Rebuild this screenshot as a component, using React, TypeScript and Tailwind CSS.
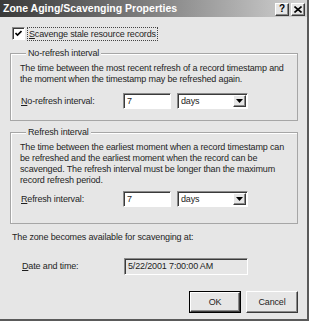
import React from "react";

const sunken =
  "border border-t-[#8a8a8a] border-l-[#8a8a8a] border-r-white border-b-white shadow-[inset_1px_1px_0_#3a3a3a]";
const raised =
  "border border-t-white border-l-white border-r-[#3a3a3a] border-b-[#3a3a3a] shadow-[inset_-1px_-1px_0_#8a8a8a]";

function U({ children }: { children: React.ReactNode }) {
  return <span className="underline underline-offset-[1px]">{children}</span>;
}

function Arrow() {
  return (
    <svg width="7" height="4" viewBox="0 0 7 4">
      <path d="M0 0H7L3.5 4Z" fill="#000" />
    </svg>
  );
}

function Row({ label }: { label: React.ReactNode }) {
  return (
    <div className="flex items-center h-[16px]">
      <div className="w-[103px] pl-[1px]">{label}</div>
      <div className={`w-[48px] h-[16px] bg-white ${sunken} pl-[3px] flex items-center`}>7</div>
      <div className={`ml-[6px] w-[71px] h-[16px] bg-white ${sunken} flex items-center`}>
        <span className="pl-[3px] flex-1">days</span>
        <div className={`w-[13px] h-[12px] mr-[1px] bg-[#e6e6e6] ${raised} flex items-center justify-center`}>
          <Arrow />
        </div>
      </div>
    </div>
  );
}

export default function App() {
  return (
    <div className="w-[309px] h-[321px] bg-[#e6e6e6] text-[#1e1e1e] font-['Liberation_Sans',Arial,sans-serif] text-[9px] leading-[11px] tracking-[-0.15px] flex flex-col border-r-2 border-b-2 border-r-[#5a5a5a] border-b-[#5a5a5a] overflow-hidden">
      <div className="h-[17px] shrink-0 flex items-center bg-linear-to-r from-[#3a3a3a] to-[#d4d4d4] pl-[3px] pr-[2px]">
        <span className="text-white font-bold text-[10.5px] tracking-normal">
          Zone Aging/Scavenging Properties
        </span>
        <div className="ml-auto flex gap-[2px] mt-[1px]">
          <div className={`w-[14px] h-[13px] bg-[#e6e6e6] ${raised} flex items-center justify-center text-black font-bold text-[10px] leading-none`}>
            ?
          </div>
          <div className={`w-[14px] h-[13px] bg-[#e6e6e6] ${raised} flex items-center justify-center`}>
            <svg width="8" height="7" viewBox="0 0 8 7">
              <path d="M0.5 0.5L7.5 6.5M7.5 0.5L0.5 6.5" stroke="#000" strokeWidth="1.6" />
            </svg>
          </div>
        </div>
      </div>

      <div className="flex flex-col px-[10px] pr-[9px]">
        <div className="mt-[10px] ml-[2px] flex items-center h-[13px]">
          <div className={`w-[13px] h-[13px] bg-white ${sunken} flex items-center justify-center`}>
            <svg width="7" height="7" viewBox="0 0 7 7">
              <path d="M0.5 3L2.5 5L6.5 1" stroke="#000" strokeWidth="1.6" fill="none" />
            </svg>
          </div>
          <span className="ml-[3px] px-[1px] outline outline-1 outline-dotted outline-[#444] leading-[12px]">
            <U>S</U>cavenge stale resource records
          </span>
        </div>

        <fieldset className="mt-[7px] border border-[#a6a6a6] shadow-[inset_1px_1px_0_#fff] pl-[9px] pt-[4px] pb-[11px]">
          <legend className="ml-[6px] px-[2px] bg-[#e6e6e6] leading-[12px]">No-refresh interval</legend>
          <p>The time between the most recent refresh of a record timestamp and</p>
          <p>the moment when the timestamp may be refreshed again.</p>
          <div className="mt-[8px]">
            <Row label={<><U>N</U>o-refresh interval:</>} />
          </div>
        </fieldset>

        <fieldset className="mt-[5px] border border-[#a6a6a6] shadow-[inset_1px_1px_0_#fff] pl-[9px] pt-[4px] pb-[16px]">
          <legend className="ml-[6px] px-[2px] bg-[#e6e6e6] leading-[12px]">Refresh interval</legend>
          <p>The time between the earliest moment when a record timestamp can</p>
          <p>be refreshed and the earliest moment when the record can be</p>
          <p>scavenged. The refresh interval must be longer than the maximum</p>
          <p>record refresh period.</p>
          <div className="mt-[5px]">
            <Row label={<><U>R</U>efresh interval:</>} />
          </div>
        </fieldset>

        <p className="mt-[8px] ml-[2px]">The zone becomes available for scavenging at:</p>

        <div className="mt-[15px] flex items-center h-[17px]">
          <div className="w-[114px] pl-[12px]">
            <U>D</U>ate and time:
          </div>
          <div className={`w-[124px] h-[17px] ${sunken} pl-[3px] flex items-center`}>
            5/22/2001 7:00:00 AM
          </div>
        </div>

        <div className="mt-[16px] flex justify-end gap-[5px]">
          <div className="border border-black">
            <div className={`w-[50px] h-[20px] ${raised} flex items-center justify-center`}>OK</div>
          </div>
          <div className={`w-[52px] h-[22px] ${raised} flex items-center justify-center`}>Cancel</div>
        </div>
      </div>
    </div>
  );
}
